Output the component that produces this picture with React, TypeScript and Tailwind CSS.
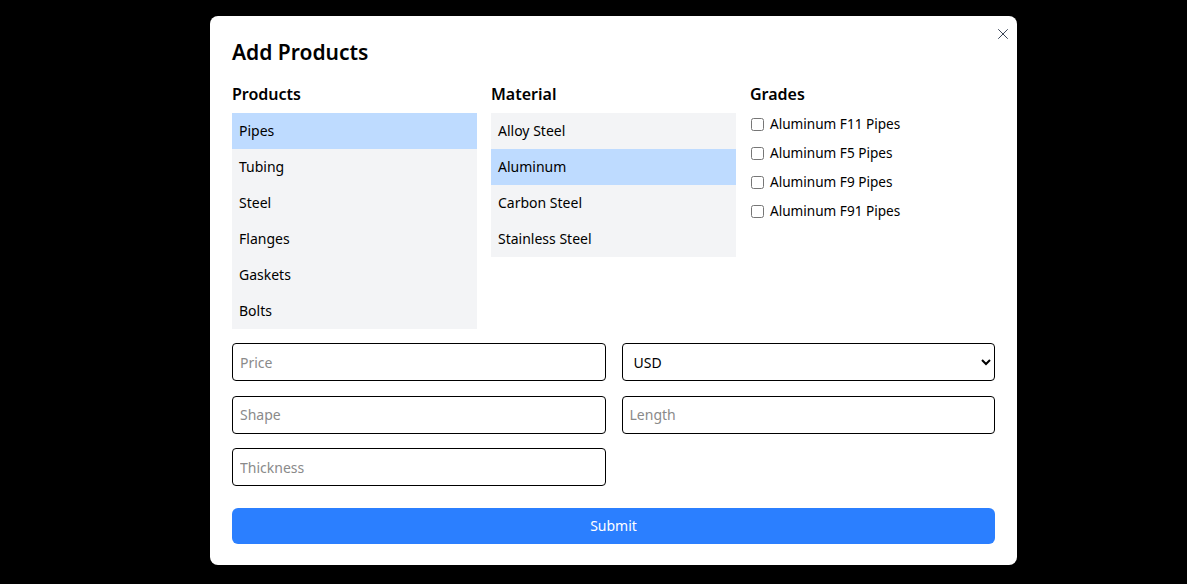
import { useState } from 'react';
import { X } from 'lucide-react';

const products = ['Pipes', 'Tubing', 'Steel', 'Flanges', 'Gaskets', 'Bolts'];
const materials = ['Alloy Steel', 'Aluminum', 'Carbon Steel', 'Stainless Steel'];
const grades = ['Aluminum F11 Pipes', 'Aluminum F5 Pipes', 'Aluminum F9 Pipes', 'Aluminum F91 Pipes'];

export default function App() {
  const [product, setProduct] = useState('Pipes');
  const [material, setMaterial] = useState('Aluminum');

  const inputCls =
    'h-[38px] w-full rounded-[4px] border border-black px-[7px] text-[14px] text-black placeholder:text-[#8a8a8a] outline-none';

  return (
    <div
      className="min-h-screen bg-black pt-4 pl-[210px]"
      style={{ fontFamily: '"Noto Sans", "Open Sans", sans-serif' }}
    >
      <div className="relative w-[807px] h-[549px] bg-white rounded-lg p-[22px]">
        {/* Close */}
        <button className="absolute top-[9px] right-[5px] flex text-gray-700">
          <X className="w-[18px] h-[18px]" strokeWidth={1.3} />
        </button>

        <h2 className="text-[21px] leading-7 font-semibold text-black">Add Products</h2>

        <div className="grid grid-cols-3 gap-[14px] mt-4">
          <div>
            <h3 className="text-[16px] leading-6 font-semibold">Products</h3>
            <ul className="mt-[7px]">
              {products.map((p) => (
                <li
                  key={p}
                  onClick={() => setProduct(p)}
                  className={`h-9 flex items-center px-[7px] pb-px text-[14px] cursor-pointer ${
                    product === p ? 'bg-blue-200' : 'bg-gray-100'
                  }`}
                >
                  {p}
                </li>
              ))}
            </ul>
          </div>

          <div>
            <h3 className="text-[16px] leading-6 font-semibold">Material</h3>
            <ul className="mt-[7px]">
              {materials.map((m) => (
                <li
                  key={m}
                  onClick={() => setMaterial(m)}
                  className={`h-9 flex items-center px-[7px] pb-px text-[14px] cursor-pointer ${
                    material === m ? 'bg-blue-200' : 'bg-gray-100'
                  }`}
                >
                  {m}
                </li>
              ))}
            </ul>
          </div>

          <div>
            <h3 className="text-[16px] leading-6 font-semibold">Grades</h3>
            <div className="mt-2 flex flex-col gap-[9px]">
              {grades.map((g) => (
                <label key={g} className="h-5 flex items-center gap-[6px] text-[13.6px]">
                  <input type="checkbox" className="w-[13px] h-[13px] m-0 ml-px" />
                  {g}
                </label>
              ))}
            </div>
          </div>
        </div>

        <div className="grid grid-cols-2 gap-x-4 gap-y-[14.5px] mt-[14px]">
          <input className={inputCls} placeholder="Price" />
          <select className={`${inputCls} bg-white`} defaultValue="USD">
            <option>USD</option>
            <option>EUR</option>
            <option>INR</option>
          </select>
          <input className={inputCls} placeholder="Shape" />
          <input className={inputCls} placeholder="Length" />
          <input className={inputCls} placeholder="Thickness" />
        </div>

        <button className="mt-[22px] w-full h-9 rounded-md bg-blue-500 text-white text-[14px] pb-px">
          Submit
        </button>
      </div>
    </div>
  );
}
